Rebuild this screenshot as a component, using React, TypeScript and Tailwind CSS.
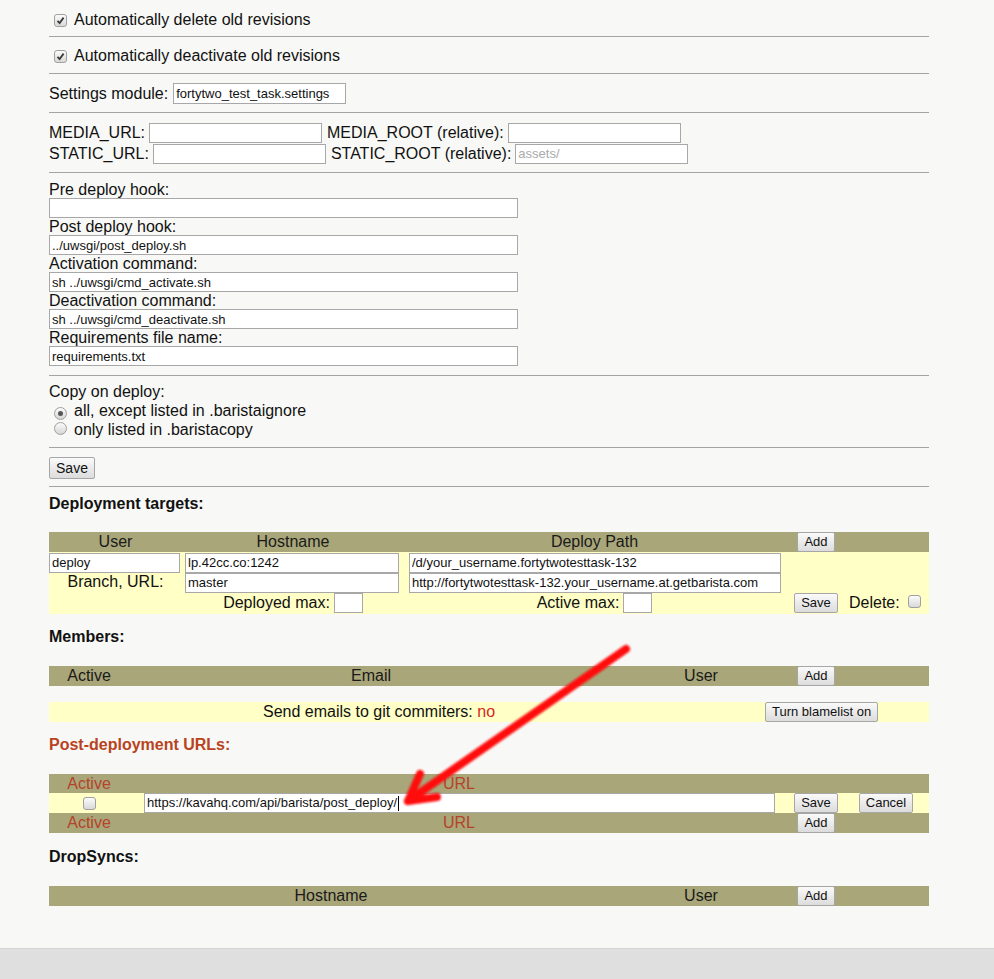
import React from "react";

// Small helpers that mimic old-school native form controls.
function Check({ checked = false }: { checked?: boolean }) {
  return (
    <span className="inline-flex h-[13px] w-[13px] shrink-0 items-center justify-center rounded-[3px] border border-[#a0a0a0] bg-linear-to-b from-[#fbfbfb] to-[#d9d9d9]">
      {checked && (
        <svg width="9" height="9" viewBox="0 0 9 9">
          <path d="M1.5 4.8 L3.6 7 L7.6 1.6" fill="none" stroke="#3a3a3a" strokeWidth="1.8" />
        </svg>
      )}
    </span>
  );
}

function Radio({ checked = false }: { checked?: boolean }) {
  return (
    <span className="inline-flex h-[13px] w-[13px] shrink-0 items-center justify-center rounded-full border border-[#a0a0a0] bg-linear-to-b from-[#fbfbfb] to-[#d6d6d6]">
      {checked && <span className="h-[5px] w-[5px] rounded-full bg-[#555]" />}
    </span>
  );
}

function Field({
  value = "",
  placeholder,
  className = "",
}: {
  value?: string;
  placeholder?: string;
  className?: string;
}) {
  return (
    <input
      readOnly
      value={value}
      placeholder={placeholder}
      className={`h-[20px] border border-[#a8a8a8] bg-white px-[2px] text-[13px] leading-[18px] text-[#111] outline-none placeholder:text-[#aaa] ${className}`}
    />
  );
}

function Btn({ children, className = "" }: { children: React.ReactNode; className?: string }) {
  return (
    <button
      type="button"
      className={`h-[20px] whitespace-nowrap rounded-[2px] border border-[#a6a6a6] bg-linear-to-b from-[#fafafa] to-[#dcdcdc] px-[6px] text-[13px] leading-[18px] text-[#111] ${className}`}
    >
      {children}
    </button>
  );
}

const Hr = () => <div className="h-px bg-[#a4a4a4]" />;

export default function App() {
  return (
    <div className="relative min-h-[979px] bg-[#f8f8f6] font-['Liberation_Sans',Arial,sans-serif] text-[16px] text-[#111]">
      <div className="ml-[49px] w-[880px]">
        {/* revisions */}
        <div className="flex h-[36px] items-center pt-[4px]">
          <span className="ml-[5px]"><Check checked /></span>
          <span className="ml-[7px]">Automatically delete old revisions</span>
        </div>
        <Hr />
        <div className="flex h-[36px] items-center pt-[2px]">
          <span className="ml-[5px]"><Check checked /></span>
          <span className="ml-[7px]">Automatically deactivate old revisions</span>
        </div>
        <Hr />
        <div className="flex h-[38px] items-center pt-[1px]">
          <span>Settings module:</span>
          <Field value="fortytwo_test_task.settings" className="ml-[5px] h-[21px] w-[173px]" />
        </div>
        <Hr />
        <div className="flex h-[59px] flex-col pt-[9px]">
          <div className="flex h-[21px] items-center">
            <span>MEDIA_URL:</span>
            <Field className="ml-[4px] w-[173px]" />
            <span className="ml-[5px]">MEDIA_ROOT (relative):</span>
            <Field className="ml-[4px] w-[173px]" />
          </div>
          <div className="flex h-[21px] items-center">
            <span>STATIC_URL:</span>
            <Field className="ml-[4px] w-[173px]" />
            <span className="ml-[5px]">STATIC_ROOT (relative):</span>
            <Field placeholder="assets/" className="ml-[4px] w-[173px]" />
          </div>
        </div>
        <Hr />
        {/* hooks */}
        <div className="flex h-[202px] flex-col pt-[8px]">
          {[
            ["Pre deploy hook:", ""],
            ["Post deploy hook:", "../uwsgi/post_deploy.sh"],
            ["Activation command:", "sh ../uwsgi/cmd_activate.sh"],
            ["Deactivation command:", "sh ../uwsgi/cmd_deactivate.sh"],
            ["Requirements file name:", "requirements.txt"],
          ].map(([label, val]) => (
            <div key={label} className="flex flex-col">
              <div className="h-[17px] leading-[17px]">{label}</div>
              <Field value={val} className="w-[469px]" />
            </div>
          ))}
        </div>
        <Hr />
        <div className="flex h-[71px] flex-col pt-[7px]">
          <div className="h-[18px] leading-[18px]">Copy on deploy:</div>
          <div className="flex h-[19px] items-center">
            <span className="ml-[5px]"><Radio checked /></span>
            <span className="ml-[7px]">all, except listed in .baristaignore</span>
          </div>
          <div className="flex h-[19px] items-center">
            <span className="ml-[5px]"><Radio /></span>
            <span className="ml-[7px]">only listed in .baristacopy</span>
          </div>
        </div>
        <Hr />
        <div className="flex h-[38px] items-start pt-[9px]">
          <Btn className="h-[22px] w-[46px] text-[14px]">Save</Btn>
        </div>
        <Hr />

        {/* Deployment targets */}
        <div className="h-[45px] pt-[8px] font-bold leading-[18px]">Deployment targets:</div>
        <div className="flex h-[20px] items-center bg-[#a9a679] text-[#1a1a1a]">
          <div className="w-[133px] text-center">User</div>
          <div className="w-[222px] text-center">Hostname</div>
          <div className="w-[381px] text-center">Deploy Path</div>
          <div className="flex w-[62px] justify-center"><Btn>Add</Btn></div>
          <div className="flex-1" />
        </div>
        <div className="bg-[#ffffc6]">
          <div className="flex h-[20px] items-center">
            <div className="w-[133px]"><Field value="deploy" className="w-[131px]" /></div>
            <div className="w-[222px]"><Field value="lp.42cc.co:1242" className="ml-[3px] w-[214px]" /></div>
            <div className="w-[381px]"><Field value="/d/your_username.fortytwotesttask-132" className="ml-[5px] w-[372px]" /></div>
          </div>
          <div className="flex h-[20px] items-center">
            <div className="w-[133px] text-center">Branch, URL:</div>
            <div className="w-[222px]"><Field value="master" className="ml-[3px] w-[214px]" /></div>
            <div className="w-[381px]">
              <Field value="http://fortytwotesttask-132.your_username.at.getbarista.com" className="ml-[5px] w-[372px]" />
            </div>
          </div>
          <div className="flex h-[22px] items-center">
            <div className="w-[133px]" />
            <div className="flex w-[222px] items-center justify-center">
              <span>Deployed max:</span>
              <Field className="ml-[4px] w-[29px]" />
            </div>
            <div className="flex w-[381px] items-center justify-center">
              <span>Active max:</span>
              <Field className="ml-[4px] w-[29px]" />
            </div>
            <div className="flex w-[62px] justify-center"><Btn>Save</Btn></div>
            <div className="flex flex-1 items-center pl-[2px]">
              <span>Delete:</span>
              <span className="ml-[8px]"><Check /></span>
            </div>
          </div>
        </div>

        {/* Members */}
        <div className="h-[52px] pt-[14px] font-bold leading-[18px]">Members:</div>
        <div className="flex h-[20px] items-center bg-[#a9a679] text-[#1a1a1a]">
          <div className="w-[80px] text-center">Active</div>
          <div className="w-[484px] text-center">Email</div>
          <div className="w-[176px] text-center">User</div>
          <div className="flex w-[54px] justify-center"><Btn>Add</Btn></div>
        </div>
        <div className="h-[16px]" />
        <div className="flex h-[20px] items-center bg-[#ffffc6]">
          <div className="w-[660px] text-center">
            Send emails to git commiters: <span className="text-[#d42a1c]">no</span>
          </div>
          <Btn className="ml-[56px] px-[4px]">Turn blamelist on</Btn>
        </div>

        {/* Post-deployment URLs */}
        <div className="h-[52px] pt-[14px] font-bold leading-[18px] text-[#b8431e]">Post-deployment URLs:</div>
        <div className="flex h-[19px] items-center bg-[#a9a679] text-[#b5432a]">
          <div className="w-[80px] text-center">Active</div>
          <div className="w-[660px] text-center">URL</div>
        </div>
        <div className="flex h-[20px] items-center bg-[#ffffc6]">
          <div className="flex w-[80px] justify-center"><Check /></div>
          <div className="w-[660px]">
            <div className="ml-[15px] flex h-[20px] w-[631px] items-center border border-[#a8a8a8] bg-white px-[2px] text-[13px] text-[#111]">
              https://kavahq.com/api/barista/post_deploy/
              <span className="ml-[1px] h-[15px] w-px bg-black" />
            </div>
          </div>
          <div className="flex w-[54px] justify-center"><Btn>Save</Btn></div>
          <div className="flex flex-1 justify-center"><Btn>Cancel</Btn></div>
        </div>
        <div className="flex h-[20px] items-center bg-[#a9a679] text-[#b5432a]">
          <div className="w-[80px] text-center">Active</div>
          <div className="w-[660px] text-center">URL</div>
          <div className="flex w-[54px] justify-center"><Btn>Add</Btn></div>
        </div>

        {/* DropSyncs */}
        <div className="h-[53px] pt-[15px] font-bold leading-[18px]">DropSyncs:</div>
        <div className="flex h-[20px] items-center bg-[#a9a679] text-[#1a1a1a]">
          <div className="w-[564px] text-center">Hostname</div>
          <div className="w-[176px] text-center">User</div>
          <div className="flex w-[54px] justify-center"><Btn>Add</Btn></div>
        </div>
        <div className="h-[42px]" />
      </div>
      <div className="h-[40px] border-t border-[#d4d4d4] bg-[#dfdfdf]" />

      {/* red annotation arrow drawn over the page */}
      <svg
        className="pointer-events-none absolute left-0 top-0"
        width="994"
        height="979"
        viewBox="0 0 994 979"
      >
        <defs>
          <filter id="soft" x="-10%" y="-10%" width="120%" height="120%">
            <feGaussianBlur stdDeviation="1.3" />
          </filter>
        </defs>
        <g filter="url(#soft)" stroke="#ff0a0a" strokeWidth="8" strokeLinecap="round" strokeLinejoin="round" fill="none">
          <path d="M626 649 L408 801" />
          <path d="M420 774 L408 801 L437 797" />
        </g>
      </svg>
    </div>
  );
}
